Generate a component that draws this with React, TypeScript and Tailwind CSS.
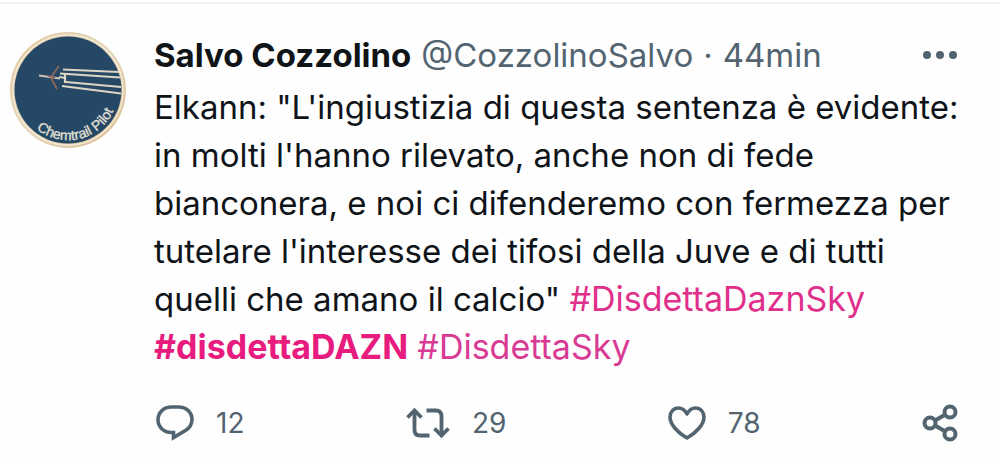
import type { ReactNode } from 'react';

const stats = {
  replies: 12,
  retweets: 29,
  likes: 78,
};

function Avatar() {
  return (
    <svg viewBox="0 0 116 116" className="h-29 w-29" role="img" aria-label="Chemtrail Pilot">
      <defs>
        <linearGradient id="rim" x1="0" y1="0" x2="1" y2="1">
          <stop offset="0" stopColor="#dfc79c" />
          <stop offset="0.5" stopColor="#e6d8bf" />
          <stop offset="1" stopColor="#d9bb8e" />
        </linearGradient>
        <path id="badge-text" d="M 26.5 97 A 50 50 0 0 0 108 56" />
      </defs>
      <circle cx="58" cy="58" r="58" fill="url(#rim)" />
      <circle cx="58" cy="58" r="55" fill="none" stroke="#f3e8d2" strokeWidth="1.5" />
      <circle cx="58" cy="58" r="53.5" fill="#254866" />
      {/* Scie */}
      <g stroke="#ddd5c6" strokeWidth="2.2" fill="none">
        <path d="M53 37.5L109 40" />
        <path d="M50 41.5L110 45.5" />
        <path d="M56 50L111 55" />
        <path d="M52 54L111 61.5" />
        <path d="M49 45L56 46M55 42V51" />
      </g>
      {/* Aereo */}
      <path d="M29 43.5L50 46.5" stroke="#c9bfb4" strokeWidth="2.2" />
      <path d="M41 45L49 34M41 46L47 57M38 44L45 46" stroke="#8c675c" strokeWidth="1.8" fill="none" />
      <text
        fill="#e3e0d6"
        stroke="#e3e0d6"
        strokeWidth="0.3"
        fontSize="14"
        className="font-['Liberation_Sans',sans-serif]"
      >
        <textPath href="#badge-text">Chemtrail Pilot</textPath>
      </text>
    </svg>
  );
}

function ReplyIcon() {
  return (
    <svg viewBox="0 0 38 36" className="h-9 w-[38px]" fill="none" stroke="currentColor" strokeWidth="3.6" aria-hidden="true">
      <path d="M15.5 2H22.5C30.5 2 36 7.5 36 14.5C36 19.5 33.3 23.3 29 25.7L17.5 32.5V27.5H15.5C7.5 27.5 2 21.7 2 14.8C2 7.6 7.5 2 15.5 2Z" />
    </svg>
  );
}

function RetweetIcon() {
  return (
    <svg viewBox="0 0 44 32" className="h-8 w-11" fill="none" stroke="currentColor" strokeWidth="3.8" aria-hidden="true">
      <path d="M1.5 10.5L8.5 3.5L15.5 10.5M8.5 4V23C8.5 26.5 10.5 28.5 14 28.5H23.5" />
      <path d="M42.5 21.5L35.5 28.5L28.5 21.5M35.5 28V9C35.5 5.5 33.5 3.5 30 3.5H20.5" />
    </svg>
  );
}

function HeartIcon() {
  return (
    <svg viewBox="0 0 38 34" className="h-[34px] w-[38px]" fill="none" stroke="currentColor" strokeWidth="3.6" strokeLinejoin="round" aria-hidden="true">
      <path d="M19 8C17 4.3 13.8 2 10.5 2C5.5 2 2 6 2 11C2 18.5 9.5 26.5 19 32C28.5 26.5 36 18.5 36 11C36 6 32.5 2 27.5 2C24.2 2 21 4.3 19 8Z" />
    </svg>
  );
}

function ShareIcon() {
  return (
    <svg viewBox="0 0 36 38" className="h-[38px] w-9" fill="none" stroke="currentColor" strokeWidth="4" aria-hidden="true">
      <circle cx="8" cy="19" r="5.5" />
      <circle cx="28" cy="8" r="5.5" />
      <circle cx="28" cy="30" r="5.5" />
      <path d="M13 16.5L23 10.7M13 21.5L23 27.3" />
    </svg>
  );
}

function Action({ label, count, children }: { label: string; count?: number; children: ReactNode }) {
  return (
    <button type="button" aria-label={label} className="flex items-center gap-[22px]">
      {children}
      {count !== undefined && <span className="text-[28px] leading-10">{count}</span>}
    </button>
  );
}

export default function App() {
  return (
    <div className="min-h-screen bg-[#fefefe] pt-0.5 font-['Inter',sans-serif] text-[#0f1419]">
      <article className="flex gap-7 border-t-2 border-[#eff3f4] pt-7 pr-[42px] pl-2.5">
        <a href="#profile" className="h-29 w-29 shrink-0">
          <Avatar />
        </a>

        <div className="min-w-0 flex-1">
          <header className="flex items-center justify-between text-[33px] leading-[46px]">
            <div className="flex gap-2.5 whitespace-nowrap text-[#536471]">
              <a href="#profile" className="font-bold text-[#0f1419]">Salvo Cozzolino</a>
              <a href="#profile">@CozzolinoSalvo</a>
              <span>·</span>
              <time>44min</time>
            </div>
            <button type="button" aria-label="Altro" className="text-[#536471]">
              <svg viewBox="0 0 36 10" className="h-2.5 w-9" fill="currentColor">
                <circle cx="5" cy="5" r="4" />
                <circle cx="18" cy="5" r="4" />
                <circle cx="31" cy="5" r="4" />
              </svg>
            </button>
          </header>

          <p className="mt-[5px] text-[33px] leading-12 whitespace-nowrap">
            Elkann: "L'ingiustizia di questa sentenza è evidente:<br />
            in molti l'hanno rilevato, anche non di fede<br />
            bianconera, e noi ci difenderemo con fermezza per<br />
            tutelare l'interesse dei tifosi della Juve e di tutti<br />
            quelli che amano il calcio"{' '}
            <a href="#DisdettaDaznSky" className="text-[34px] leading-12 text-[#e0308c]">#DisdettaDaznSky</a><br />
            <a href="#disdettaDAZN" className="text-[34px] leading-12 font-bold text-[#e71c7e]">#disdettaDAZN</a>{' '}
            <a href="#DisdettaSky" className="text-[34px] leading-12 text-[#d93a94]">#DisdettaSky</a>
          </p>

          <footer className="mt-8 flex items-center justify-between pl-0.5 text-[#536471]">
            <Action label="Rispondi" count={stats.replies}>
              <ReplyIcon />
            </Action>
            <Action label="Retweet" count={stats.retweets}>
              <RetweetIcon />
            </Action>
            <Action label="Mi piace" count={stats.likes}>
              <HeartIcon />
            </Action>
            <Action label="Condividi">
              <ShareIcon />
            </Action>
          </footer>
        </div>
      </article>
    </div>
  );
}
